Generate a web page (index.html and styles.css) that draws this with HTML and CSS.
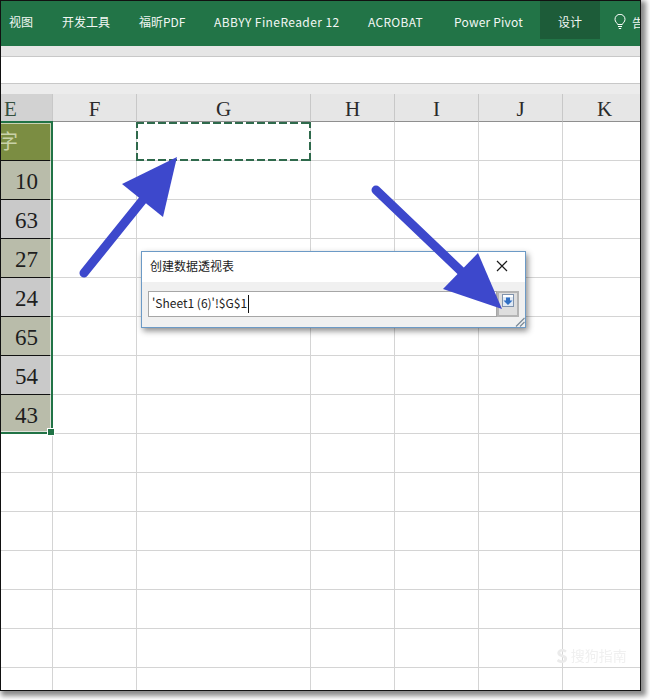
FILE: index.html
```html
<!DOCTYPE html>
<html lang="zh-CN">
<head>
<meta charset="utf-8">
<title>创建数据透视表</title>
<link rel="stylesheet" href="styles.css">
</head>
<body>
<div class="window">
  <nav class="ribbon">
    <span class="tab tab-view">视图</span>
    <span class="tab tab-dev">开发工具</span>
    <span class="tab tab-pdf">福昕PDF</span>
    <span class="tab tab-abbyy">ABBYY FineReader 12</span>
    <span class="tab tab-acro">ACROBAT</span>
    <span class="tab tab-pivot">Power Pivot</span>
    <span class="tab tab-active">设计</span>
    <span class="tell">
      <svg class="bulb" width="12" height="16" viewBox="0 0 12 16"><path d="M3.7 10.5C3.2 8.8 1 8 1 5.3A5 5 0 0 1 11 5.300C11 8 8.800 8.800 8.300 10.500H3.700ZM4 12.500H8M4.800 14.500H7.200" fill="none" stroke="#fff" stroke-width="1"/></svg>
      <span>告诉我</span>
    </span>
  </nav>
  <div class="band"></div>
  <div class="formula"></div>
  <div class="strip"></div>
  <div class="sheet">
    <div class="col col-e">E</div><div class="col">F</div><div class="col">G</div><div class="col">H</div><div class="col">I</div><div class="col">J</div><div class="col">K</div>

    <div class="cell e head"><span class="zi">字</span></div><div class="cell"></div><div class="cell copy"></div><div class="cell"></div><div class="cell"></div><div class="cell"></div><div class="cell"></div>
    <div class="cell e odd">10</div><div class="cell"></div><div class="cell"></div><div class="cell"></div><div class="cell"></div><div class="cell"></div><div class="cell"></div>
    <div class="cell e even">63</div><div class="cell"></div><div class="cell"></div><div class="cell"></div><div class="cell"></div><div class="cell"></div><div class="cell"></div>
    <div class="cell e odd">27</div><div class="cell"></div><div class="cell"></div><div class="cell"></div><div class="cell"></div><div class="cell"></div><div class="cell"></div>
    <div class="cell e even">24</div><div class="cell"></div><div class="cell"></div><div class="cell"></div><div class="cell"></div><div class="cell"></div><div class="cell"></div>
    <div class="cell e odd">65</div><div class="cell"></div><div class="cell"></div><div class="cell"></div><div class="cell"></div><div class="cell"></div><div class="cell"></div>
    <div class="cell e even">54</div><div class="cell"></div><div class="cell"></div><div class="cell"></div><div class="cell"></div><div class="cell"></div><div class="cell"></div>
    <div class="cell e odd">43</div><div class="cell"></div><div class="cell"></div><div class="cell"></div><div class="cell"></div><div class="cell"></div><div class="cell"></div>
    <div class="cell"></div><div class="cell"></div><div class="cell"></div><div class="cell"></div><div class="cell"></div><div class="cell"></div><div class="cell"></div>
    <div class="cell"></div><div class="cell"></div><div class="cell"></div><div class="cell"></div><div class="cell"></div><div class="cell"></div><div class="cell"></div>
    <div class="cell"></div><div class="cell"></div><div class="cell"></div><div class="cell"></div><div class="cell"></div><div class="cell"></div><div class="cell"></div>
    <div class="cell"></div><div class="cell"></div><div class="cell"></div><div class="cell"></div><div class="cell"></div><div class="cell"></div><div class="cell"></div>
    <div class="cell"></div><div class="cell"></div><div class="cell"></div><div class="cell"></div><div class="cell"></div><div class="cell"></div><div class="cell"></div>
    <div class="cell"></div><div class="cell"></div><div class="cell"></div><div class="cell"></div><div class="cell"></div><div class="cell"></div><div class="cell"></div>
    <div class="cell"></div><div class="cell"></div><div class="cell"></div><div class="cell"></div><div class="cell"></div><div class="cell"></div><div class="cell"></div>
  </div>

  <div class="selection"><i class="handle"></i></div>

  <section class="dialog">
    <header class="dialog-title">
      <span>创建数据透视表</span>
      <svg class="close" width="12" height="12" viewBox="0 0 12 12"><path d="M1 1L11 11M11 1L1 11" stroke="#1a1a1a" stroke-width="1.200" fill="none"/></svg>
    </header>
    <div class="dialog-body">
      <div class="ref-input"><span>'Sheet1 (6)'!$G$1</span><i class="caret"></i></div>
      <div class="ref-button">
        <svg width="12" height="13" viewBox="0 0 12 13"><rect x="0.500" y="0.500" width="11" height="12" fill="#dfe9f5" stroke="#7f93ad"/><rect x="1" y="1" width="10" height="2" fill="#fff"/><path d="M4 3.500H8V6.500H10.500L6 11L1.500 6.500H4Z" fill="#2f6fc4"/></svg>
      </div>
    </div>
    <svg class="grip" width="10" height="10" viewBox="0 0 10 10"><path d="M9.500 1L1 9.500M9.500 5L5 9.500" stroke="#7d8c99" stroke-width="1.300" fill="none"/></svg>
  </section>

  <div class="watermark"><b>S</b><span>搜狗指南</span></div>

  <svg class="arrows" width="650" height="700" viewBox="0 0 650 700">
    <path d="M84 273L146 196" stroke="#3d48cc" stroke-width="9" stroke-linecap="round" fill="none"/>
    <path d="M177 157L122 184L163 217Z" fill="#3d48cc"/>
    <path d="M376 190L464 274" stroke="#3d48cc" stroke-width="9" stroke-linecap="round" fill="none"/>
    <path d="M502 309L478 253L443 289Z" fill="#3d48cc"/>
  </svg>
</div>
</body>
</html>
```

FILE: styles.css
```css
* { box-sizing: border-box; }
html, body { margin: 0; padding: 0; background: #fff; }
body { width: 650px; height: 700px; overflow: hidden; }

.window {
  position: relative;
  width: 641px;
  height: 691px;
  border: 1px solid #111;
  background: #fff;
  overflow: hidden;
  box-shadow: 3px 3px 5px 2px #8a8a8a;
  display: flex;
  flex-direction: column;
  font-family: "Noto Sans CJK SC", "Noto Sans", sans-serif;
}

.ribbon {
  height: 45px;
  flex: none;
  background: #227447;
  color: #f2f7f4;
  font-size: 12px;
  display: flex;
  align-items: flex-start;
}
.tab { display: block; flex: none; height: 38px; line-height: 42px; white-space: nowrap; }
.tab-view { margin-left: 8px; width: 53px; }
.tab-dev { width: 77px; }
.tab-pdf { width: 75px; }
.tab-abbyy { width: 154px; letter-spacing: .42px; }
.tab-acro { width: 86px; letter-spacing: .3px; }
.tab-pivot { width: 86px; letter-spacing: .2px; }
.tab-active { width: 60px; background: #1d5c39; text-align: center; }
.tell { display: flex; flex: none; align-items: center; gap: 6px; margin-left: 14px; height: 42px; white-space: nowrap; }

.band { height: 11px; flex: none; background: #e6e6e6; border-bottom: 1px solid #c8c8c8; }
.formula { height: 27px; flex: none; background: #fff; border-bottom: 1px solid #c8c8c8; }
.strip { height: 10px; flex: none; background: #ececec; }

.sheet {
  flex: none;
  display: grid;
  grid-template-columns: 52px 84px 174px 84px 84px 84px 84px;
  grid-template-rows: 28px repeat(15, 39px);
  font-family: "Liberation Serif", "Noto Serif CJK SC", serif;
}
.col {
  background: #e6e6e6;
  border-right: 1px solid #c8c8c8;
  border-bottom: 1px solid #8f8f8f;
  color: #2a2a2a;
  font-size: 21px;
  line-height: 30px;
  text-align: center;
}
.col-e { background: #d2d2d2; color: #35503f; text-align: left; padding-left: 3px; }

.cell {
  border-right: 1px solid #d4d4d4;
  border-bottom: 1px solid #d4d4d4;
  font-size: 23px;
  line-height: 42px;
  text-align: center;
  color: #1e1e1e;
}
.cell.e { border-right: 0; border-bottom: 1px solid #111; padding-right: 1px; height: 39px; overflow: hidden; }
.head { background: #7b8d42; color: #c9d2a8; text-align: left; overflow: hidden; }
.zi { font-family: "Noto Sans CJK SC", serif; font-size: 20px; line-height: 38px; display: block; margin-left: -3px; }
.odd { background: #b9bcaa; }
.even { background: #c9c9c9; }

.selection {
  position: absolute;
  left: -3px;
  top: 120px;
  width: 55px;
  height: 313px;
  border: 2px solid #217346;
  outline: 1px solid rgba(255,255,255,.6);
  outline-offset: -3px;
}
.handle {
  position: absolute;
  right: -4px;
  bottom: -4px;
  width: 6px;
  height: 6px;
  background: #217346;
  border: 1px solid #fff;
  box-sizing: content-box;
}

.copy { position: relative; }
.copy::after {
  content: "";
  position: absolute;
  left: -1px;
  top: 0;
  right: -1px;
  bottom: -1px;
  background:
    repeating-linear-gradient(90deg, #2f6a4c 0 8px, transparent 8px 11px) left top / 100% 2px no-repeat,
    repeating-linear-gradient(90deg, #2f6a4c 0 8px, transparent 8px 11px) left bottom / 100% 2px no-repeat,
    repeating-linear-gradient(0deg, #2f6a4c 0 8px, transparent 8px 11px) left top / 2px 100% no-repeat,
    repeating-linear-gradient(0deg, #2f6a4c 0 8px, transparent 8px 11px) right top / 2px 100% no-repeat;
}

.dialog {
  position: absolute;
  left: 140px;
  top: 250px;
  width: 385px;
  height: 77px;
  border: 1px solid #6c9ac6;
  background: #f0f0f0;
  box-shadow: 2px 3px 6px rgba(0,0,0,.45);
  font-size: 12px;
  color: #222;
}
.dialog-title {
  height: 30px;
  background: #fff;
  display: flex;
  align-items: center;
  justify-content: space-between;
  padding: 0 17px 3px 8px;
}
.dialog-body { display: flex; padding: 9px 0 0 6px; }
.ref-input {
  width: 349px;
  height: 26px;
  border: 1px solid #a6a6a6;
  background: #fff;
  display: flex;
  align-items: center;
  padding: 0 0 3px 3px;
  font-size: 12px;
  color: #222;
  white-space: nowrap;
}
.caret { width: 1px; height: 18px; background: #111; margin: 2px 0 0 1px; }
.ref-button {
  width: 22px;
  height: 26px;
  background: #dedede;
  border: 2px solid #b4b4b4;
  display: flex;
  align-items: flex-start;
  justify-content: center;
  padding-top: 1px;
}
.grip { position: absolute; right: 0; bottom: 0; }

.watermark {
  position: absolute;
  left: 555px;
  top: 640px;
  display: flex;
  align-items: center;
  gap: 3px;
  color: #f0f0f0;
  font-size: 14px;
  filter: blur(.6px);
}
.watermark b { font-size: 19px; color: #ebebeb; }

.arrows { position: absolute; left: -1px; top: -1px; pointer-events: none; }
```
